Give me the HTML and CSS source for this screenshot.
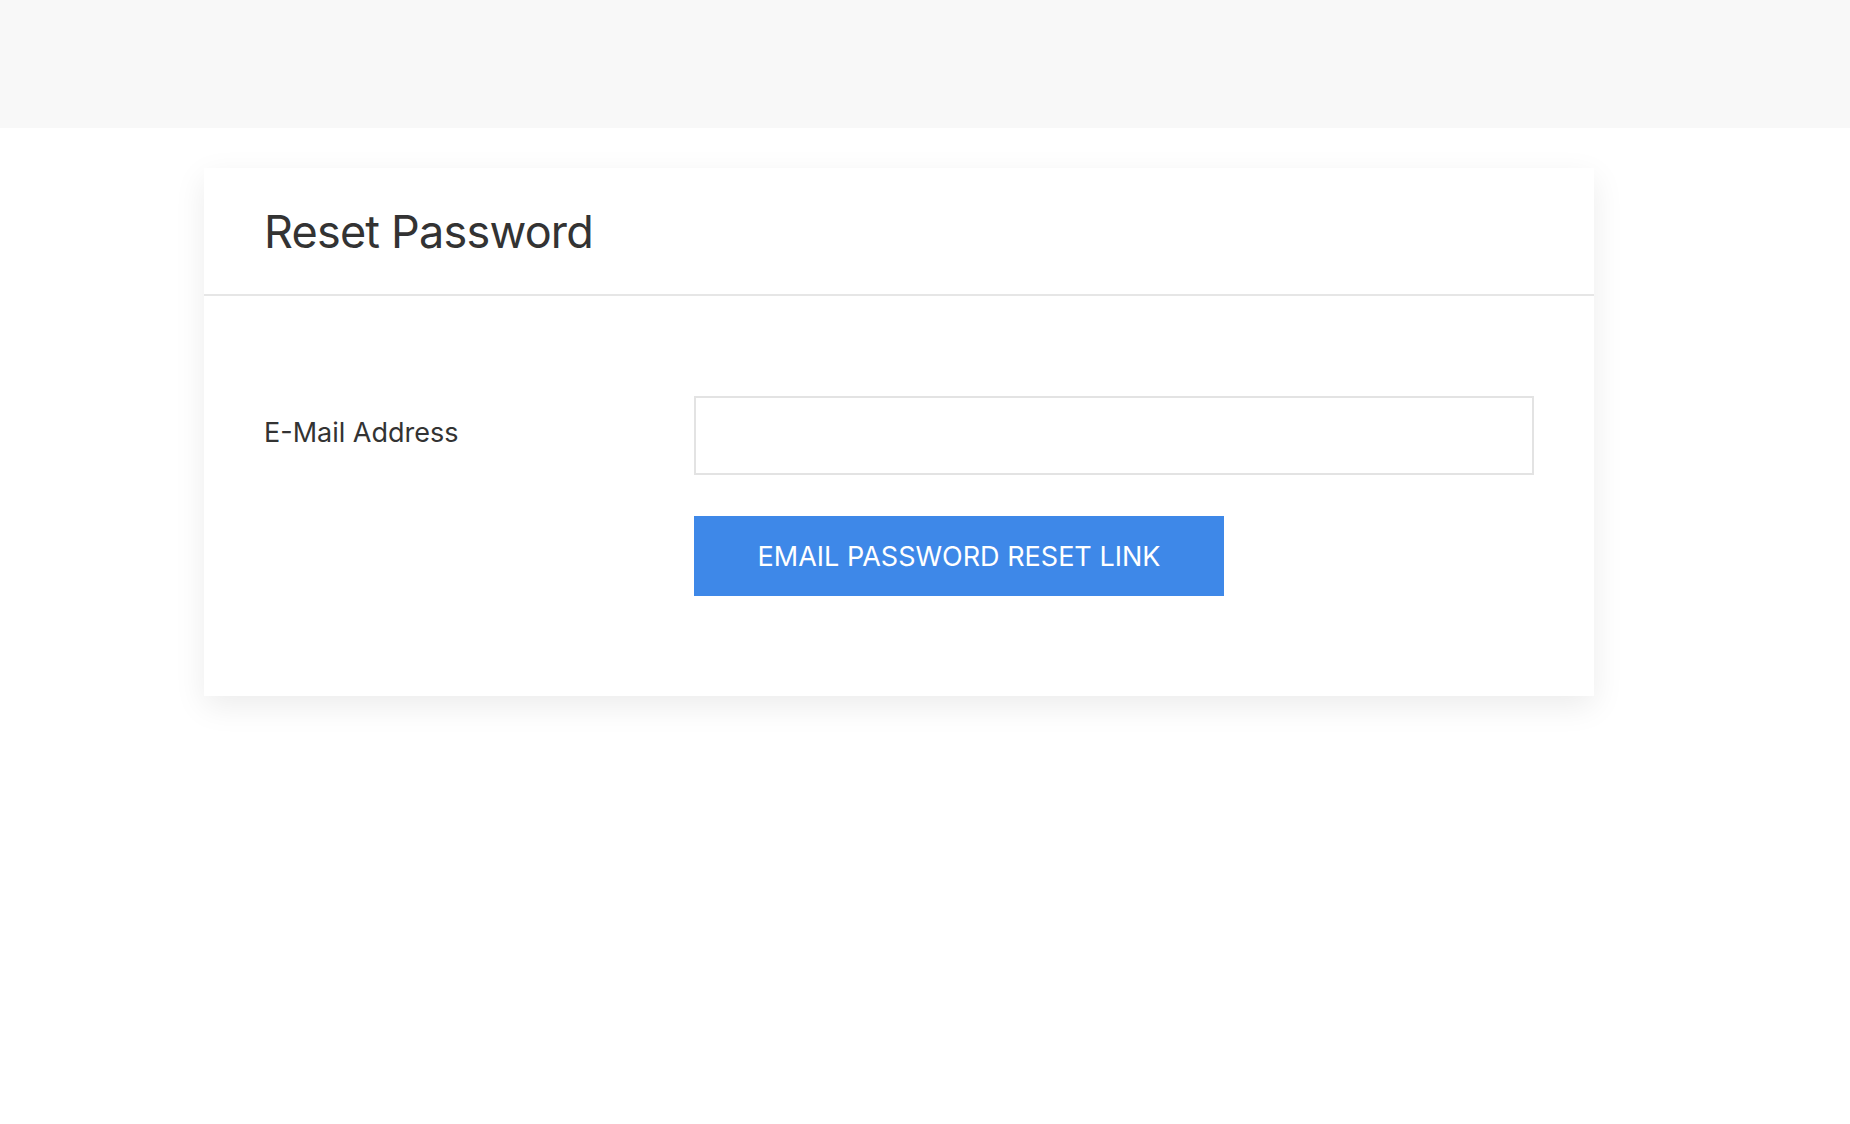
FILE: index.html
```html
<!DOCTYPE html>
<html lang="en">
<head>
<meta charset="utf-8">
<title>Reset Password</title>
<link rel="stylesheet" href="styles.css">
</head>
<body>
<header class="topbar"></header>
<main class="page">
  <section class="card">
    <div class="card-header">
      <h1 class="card-title">Reset Password</h1>
    </div>
    <form class="card-body">
      <div class="form-row">
        <label class="form-label" for="email">E-Mail Address</label>
        <input class="form-input" id="email" type="email">
      </div>
      <div class="form-row">
        <div class="form-label"></div>
        <button class="btn-primary" type="button">EMAIL PASSWORD RESET LINK</button>
      </div>
    </form>
  </section>
</main>
</body>
</html>
```
FILE: styles.css
```css
html, body {
  margin: 0;
  padding: 0;
  background: #ffffff;
}
body {
  min-height: 100vh;
  font-family: Inter, "Liberation Sans", Arial, sans-serif;
  color: #333333;
}
.topbar {
  height: 128px;
  background: #f8f8f8;
}
.page {
  padding-top: 40px;
  padding-left: 204px;
  padding-bottom: 60px;
}
.card {
  width: 1390px;
  background: #ffffff;
  box-shadow: 0 10px 30px rgba(0, 0, 0, 0.08);
}
.card-header {
  height: 126px;
  display: flex;
  align-items: center;
  padding: 0 60px;
  border-bottom: 2px solid #e6e6e6;
}
.card-title {
  margin: 0;
  font-size: 45px;
  font-weight: 400;
  letter-spacing: -0.8px;
  color: #333333;
}
.card-body {
  padding: 100px 60px;
  display: flex;
  flex-direction: column;
  gap: 41px;
}
.form-row {
  display: flex;
  align-items: center;
}
.form-label {
  width: 430px;
  flex: none;
  font-size: 27px;
  padding-bottom: 6px;
  color: #333333;
}
.form-input {
  flex: 1;
  height: 79px;
  box-sizing: border-box;
  border: 2px solid #e3e3e3;
  background: #fff;
  margin: 0;
  outline: none;
  font-size: 26px;
}
.btn-primary {
  height: 80px;
  width: 530px;
  border: none;
  background: #3e88e8;
  color: #ffffff;
  font-family: inherit;
  font-size: 27px;
  padding: 0;
  cursor: pointer;
}
```
